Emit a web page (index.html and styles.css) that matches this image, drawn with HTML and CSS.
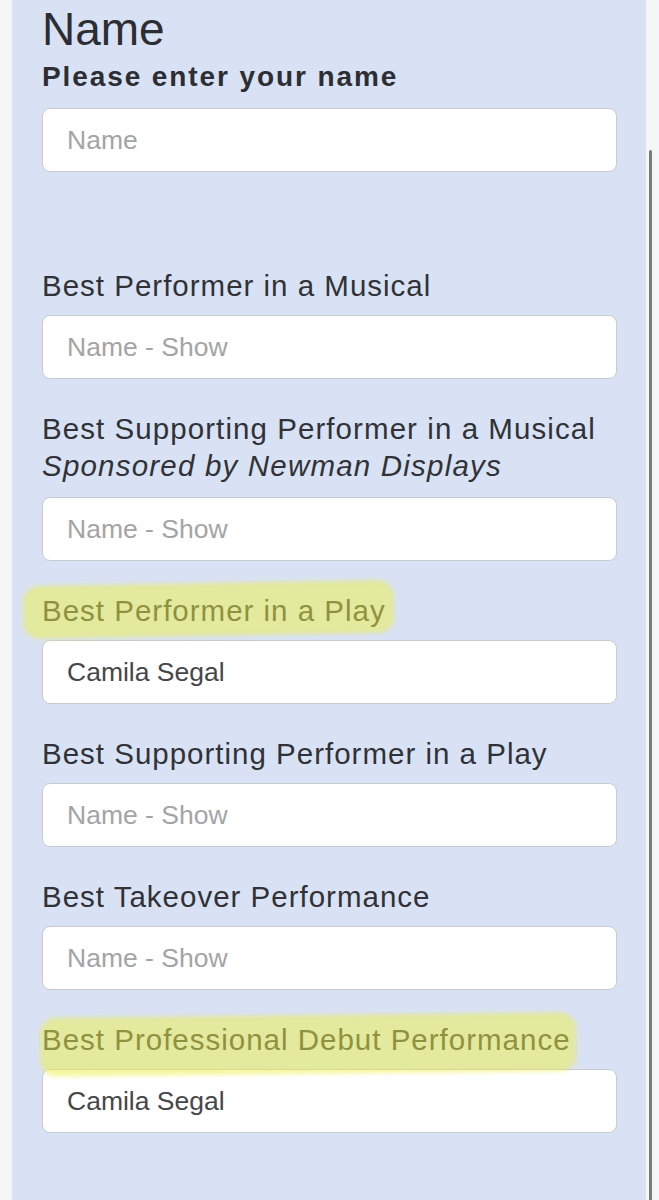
FILE: index.html
```html
<!DOCTYPE html>
<html lang="en">

<head>
    <meta charset="UTF-8">
    <meta name="viewport" content="width=device-width, initial-scale=1.0">
    <title>Awards Vote</title>

    <!--Style-->

    <link rel="stylesheet" href="styles.css">
</head>

<!--Main Body-->

<body>
    <div class="formPanel">
        <h2 class="formTitle">Name</h2>
        <p class="formSubtitle">Please enter your name</p>
        <input type="text" class="textInput" placeholder="Name">

        <div class="field firstField">
            <label class="fieldLabel">Best Performer in a Musical</label>
            <input type="text" class="textInput" placeholder="Name - Show">
        </div>

        <div class="field">
            <label class="fieldLabel twoLine">Best Supporting Performer in a Musical
                <em class="sponsor">Sponsored by Newman Displays</em></label>
            <input type="text" class="textInput" placeholder="Name - Show">
        </div>

        <div class="field">
            <label class="fieldLabel"><span class="marker markerOne">Best Performer in a Play</span></label>
            <input type="text" class="textInput" placeholder="Name - Show" value="Camila Segal">
        </div>

        <div class="field">
            <label class="fieldLabel">Best Supporting Performer in a Play</label>
            <input type="text" class="textInput" placeholder="Name - Show">
        </div>

        <div class="field">
            <label class="fieldLabel">Best Takeover Performance</label>
            <input type="text" class="textInput" placeholder="Name - Show">
        </div>

        <div class="field">
            <label class="fieldLabel"><span class="marker markerTwo">Best Professional Debut Performance</span></label>
            <input type="text" class="textInput" placeholder="Name - Show" value="Camila Segal">
        </div>
    </div>

    <!--Scrollbar-->

    <div class="scrollThumb"></div>
</body>

</html>
```

FILE: styles.css
```css
body {
    margin: 0;
    background-color: #f5f6f8;
    font-family: "Liberation Sans", Arial, sans-serif;
}

.formPanel {
    margin: 0 13px 0 12px;
    padding: 3px 29px 140px 30px;
    background-color: #d9e2f4;
}

.formTitle {
    margin: 0;
    font-size: 46px;
    font-weight: normal;
    line-height: 53px;
    color: #2c2e33;
}

.formSubtitle {
    margin: 4px 0 14px 0;
    font-size: 28px;
    font-weight: bold;
    line-height: 34px;
    letter-spacing: 1.9px;
    color: #2c2e33;
}

.textInput {
    display: block;
    box-sizing: border-box;
    width: 100%;
    height: 64px;
    margin: 0;
    padding: 0 24px;
    border: 1.5px solid #c8cacf;
    border-radius: 8px;
    background-color: #ffffff;
    font-family: "Liberation Sans", Arial, sans-serif;
    font-size: 26.5px;
    color: #45474b;
    outline: none;
}

.textInput::placeholder {
    color: #a3a4a6;
}

.field {
    margin-top: 31px;
}

.firstField {
    margin-top: 95px;
}

.fieldLabel {
    display: block;
    margin-bottom: 11px;
    font-size: 29.5px;
    line-height: 37px;
    letter-spacing: 1px;
    color: #303237;
}

.twoLine {
    margin-bottom: 13px;
    letter-spacing: 1.07px;
}

.sponsor {
    display: block;
    letter-spacing: 1.2px;
}

/* highlighter strokes */

.marker {
    position: relative;
    display: inline-block;
}

.marker::after {
    content: "";
    position: absolute;
    background-color: rgba(238, 240, 70, 0.5);
    border-radius: 16px;
    filter: blur(2px);
}

.markerOne::after {
    top: -9px;
    bottom: -7px;
    left: -19px;
    right: -8px;
    transform: rotate(-1deg);
}

.markerTwo::after {
    top: -6px;
    bottom: -16px;
    left: -2px;
    right: -5px;
    transform: rotate(-0.6deg);
}

.scrollThumb {
    position: fixed;
    top: 150px;
    right: 7px;
    width: 3px;
    height: 1100px;
    border-radius: 2px;
    background-color: #7b7b7b;
}
```
